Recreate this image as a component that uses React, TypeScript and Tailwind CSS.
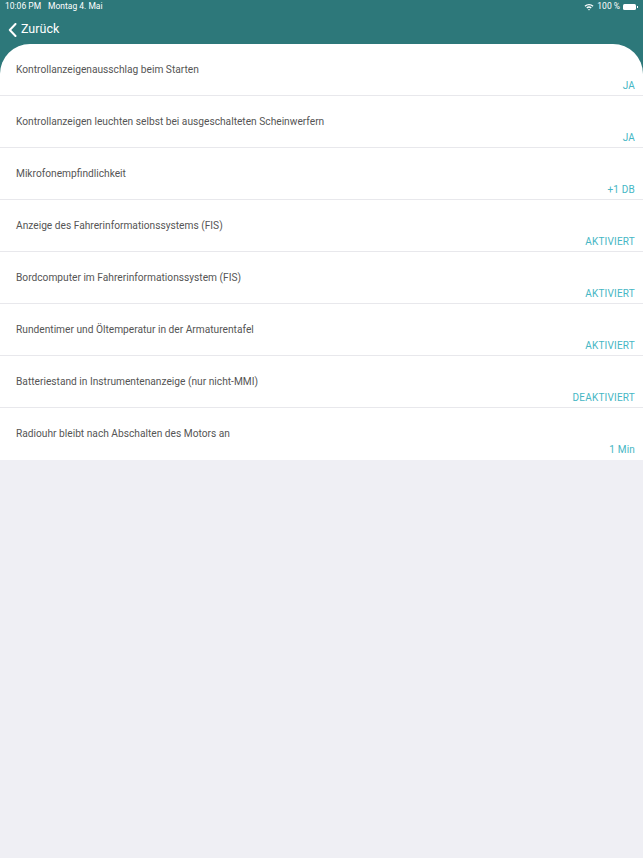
import React from "react";

const rows: [string, string][] = [
  ["Kontrollanzeigenausschlag beim Starten", "JA"],
  ["Kontrollanzeigen leuchten selbst bei ausgeschalteten Scheinwerfern", "JA"],
  ["Mikrofonempfindlichkeit", "+1 DB"],
  ["Anzeige des Fahrerinformationssystems (FIS)", "AKTIVIERT"],
  ["Bordcomputer im Fahrerinformationssystem (FIS)", "AKTIVIERT"],
  ["Rundentimer und Öltemperatur in der Armaturentafel", "AKTIVIERT"],
  ["Batteriestand in Instrumentenanzeige (nur nicht-MMI)", "DEAKTIVIERT"],
  ["Radiouhr bleibt nach Abschalten des Motors an", "1 Min"],
];

export default function App() {
  return (
    <div
      className="w-[643px] h-[858px] bg-[#efeff4] flex flex-col overflow-hidden"
      style={{ fontFamily: 'Roboto, "Liberation Sans", sans-serif' }}
    >
      <div className="bg-[#2d787a] text-white">
        <div className="h-[13px] flex items-center justify-between px-[5px] text-[8.5px] font-normal">
          <div className="flex gap-[7px]">
            <span>10:06 PM</span>
            <span>Montag 4. Mai</span>
          </div>
          <div className="flex items-center gap-[3px]">
            <svg width="10" height="8" viewBox="0 0 10 8">
              <path d="M0.5 2.8 A6.5 6.5 0 0 1 9.5 2.8 L8.5 3.8 A5 5 0 0 0 1.5 3.8 Z" fill="white" />
              <path d="M2.3 4.6 A4 4 0 0 1 7.7 4.6 L6.7 5.6 A2.6 2.6 0 0 0 3.3 5.6 Z" fill="white" />
              <path d="M4 6.4 A1.4 1.4 0 0 1 6 6.4 L5 7.5 Z" fill="white" />
            </svg>
            <span>100 %</span>
            <div className="flex items-center">
              <div className="w-[13px] h-[6px] bg-white rounded-[1.5px]" />
              <div className="w-[1px] h-[2px] bg-white ml-[1px]" />
            </div>
          </div>
        </div>
        <div className="h-[31px] flex items-center pl-[8px] pt-[2px] gap-[4px]">
          <svg width="9" height="14" viewBox="0 0 9 14">
            <path d="M7.5 1 L1.8 7 L7.5 13" stroke="white" strokeWidth="2" fill="none" strokeLinecap="round" strokeLinejoin="round" />
          </svg>
          <span className="text-[12.5px]">Zurück</span>
        </div>
      </div>
      <div className="bg-[#2d787a]">
        <div className="bg-white rounded-t-[30px]">
          {rows.map(([t, v], i) => (
            <div
              key={i}
              className={`h-[52px] flex flex-col px-[16px] ${i < rows.length - 1 ? "border-b border-[#e8e8ec]" : ""}`}
            >
              <div className="pt-[19px] text-[10.2px] text-[#555555] leading-[14px]">{t}</div>
              <div className="text-right text-[10px] text-[#45b6c4] leading-[14px] mt-[2px] tracking-[0.2px] mr-[-8px]">
                {v}
              </div>
            </div>
          ))}
        </div>
      </div>
    </div>
  );
}
